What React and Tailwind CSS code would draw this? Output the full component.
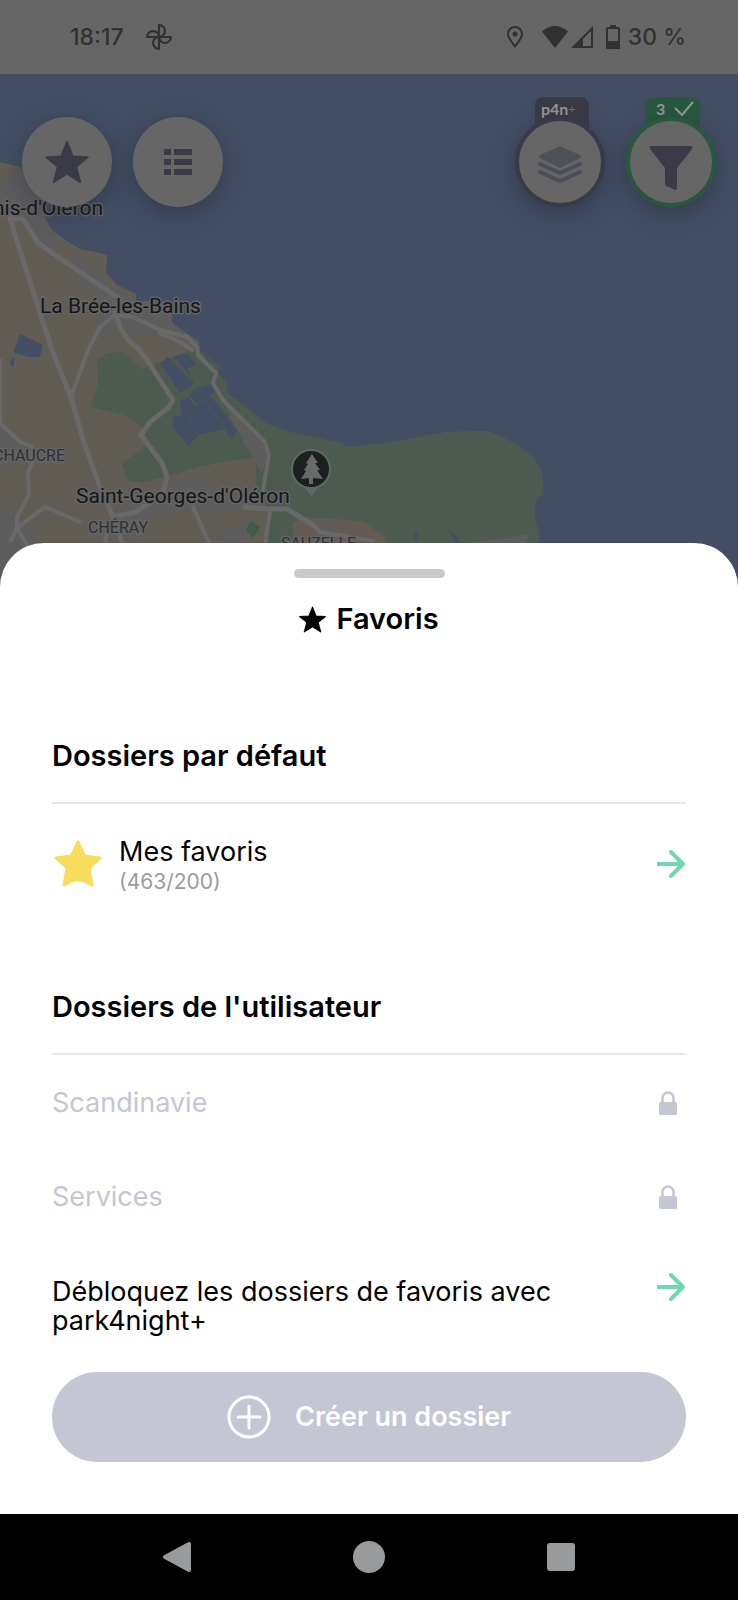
import React from 'react';
import clsx from 'clsx';

const lockedFolders = ['Scandinavie', 'Services'];

const ROUND_BUTTON =
  'relative flex h-[90px] w-[90px] items-center justify-center rounded-full bg-[#666666] shadow-[0_6px_24px_rgba(30,40,56,0.45)]';

function StarIcon({ className }) {
  return (
    <svg viewBox="0 0 24 24" className={className} fill="currentColor" stroke="currentColor" strokeWidth="1" strokeLinejoin="round" aria-hidden="true">
      <path d="M12 1 L15.1 8.900 L23.400 9.300 L17 14.600 L19.300 23 L12 18.400 L4.700 23 L7 14.600 L0.600 9.300 L8.900 8.900 Z" />
    </svg>
  );
}

function YellowStarIcon({ className }) {
  return (
    <svg viewBox="0 0 48 48" className={className} fill="#f9dc5c" stroke="#f9dc5c" strokeWidth="3" strokeLinejoin="round" aria-hidden="true">
      <path d="M24 2 L30.500 16 L46 18 L35 28 L38 45 Q30 40 24 39.500 Q18 40 10 45 L13 28 L2 18 L17.500 16 Z" />
    </svg>
  );
}

function ArrowIcon() {
  return (
    <svg viewBox="0 0 30 30" className="h-[30px] w-[30px] shrink-0" fill="none" stroke="#6fd9ab" strokeWidth="4" aria-hidden="true">
      <path d="M1 15 H27" />
      <path d="M15 3 L27 15 L15 27" strokeLinecap="round" strokeLinejoin="round" />
    </svg>
  );
}

function LockIcon() {
  return (
    <svg viewBox="0 0 18 24" className="mr-[9px] h-6 w-[18px]" aria-hidden="true">
      <path d="M3.500 13 V7 A5.500 5.500 0 0 1 14.500 7 V13" fill="none" stroke="#c4c6d3" strokeWidth="2.600" />
      <rect x="0" y="11" width="18" height="13" rx="1.500" fill="#c4c6d3" />
    </svg>
  );
}

function StatusBar() {
  return (
    <div className="flex h-[74px] items-center justify-between bg-[#666666] pr-[52px] pl-[70px] text-[23px] font-medium text-[#2f3231]">
      <div className="flex items-center gap-[22px]">
        <span>18:17</span>
        <svg viewBox="0 0 24 24" className="h-[26px] w-[26px]" fill="none" stroke="currentColor" strokeWidth="2" strokeLinejoin="round" aria-hidden="true">
          <path d="M12 12 V1 A5.500 5.500 0 0 1 12 12" />
          <path d="M12 12 H1 A5.500 5.500 0 0 1 12 12" />
          <path d="M12 12 V23 A5.500 5.500 0 0 1 12 12" />
          <path d="M12 12 H23 A5.500 5.500 0 0 1 12 12" />
        </svg>
      </div>
      <div className="flex items-center">
        <svg viewBox="0 0 16 22" className="mr-[19px] h-[22px] w-4" fill="none" stroke="currentColor" strokeWidth="2" aria-hidden="true">
          <path d="M8 20.500 C5 16.500 1 12 1 8 A7 7 0 0 1 15 8 C15 12 11 16.500 8 20.500 Z" />
          <circle cx="8" cy="8" r="2.500" fill="currentColor" stroke="none" />
        </svg>
        <svg viewBox="0 0 26 22" className="mr-[3px] h-[22px] w-[26px]" fill="currentColor" aria-hidden="true">
          <path d="M0 5.500 Q13 -5.500 26 5.500 L13 22 Z" />
        </svg>
        <svg viewBox="0 0 22 22" className="mr-[13px] h-[22px] w-[22px]" aria-hidden="true">
          <path d="M2.500 21 L21 2.500 V21 Z" fill="none" stroke="currentColor" strokeWidth="2" />
          <path d="M1 22 L12 11 V22 Z" fill="currentColor" />
        </svg>
        <svg viewBox="0 0 14 24" className="mr-2 h-6 w-[14px]" aria-hidden="true">
          <path d="M4 0 H10 V3 H4 Z M0 16 H14 V23 Q14 24 13 24 H1 Q0 24 0 23 Z" fill="currentColor" />
          <rect x="1" y="3" width="12" height="20" rx="1" fill="none" stroke="currentColor" strokeWidth="2" />
        </svg>
        <span>30 %</span>
      </div>
    </div>
  );
}

function MapBackground() {
  return (
    <svg
      viewBox="0 74 738 519"
      preserveAspectRatio="xMidYMin slice"
      className="absolute inset-0 h-full w-full"
      role="img"
      aria-label="Carte de l'île d'Oléron"
    >
      <rect x="0" y="74" width="738" height="519" fill="#434e64" />

      {/* Island */}
      <path
        d="M0 162 L20 167 L45 200 V218 L52 230 L62 238 L80 249 L95 252 L107 255 L106 273 L117 285 L136 294 V302 L160 300 L172 313 V323 L199 342 L200 353 L220 367 L217 373 L227 382 V393 L247 408 L267 424 L293 433 L342 443 L346 447 L380 444 L410 439 L447 432 L488 431 L512 442 L533 457 L542 473 L543 493 L536 500 L534 513 L539 535 L536 593 H0 Z"
        fill="#625d54"
      />

      {/* Woods */}
      <path
        d="M97 360 L107 353 L125 352 L142 369 L157 363 L197 348 L220 367 L217 373 L227 382 V393 L247 408 L267 424 L293 433 L342 443 L346 447 L380 444 L410 439 L447 432 L488 431 L512 442 L533 457 L542 473 L543 493 L536 500 L534 513 L539 535 V593 H266 L272 515 L257 490 L255 457 L197 467 L170 476 L143 482 L128 481 L122 464 L145 446 L142 427 L127 416 L91 407 L98 383 Z"
        fill="#4d5a50"
      />
      <path d="M272 513 L292 512 L299 518 L290 530 L285 545 H266 Z" fill="#4d5a50" />
      <path d="M293 523 L303 517 L363 521 L385 537 V560 H293 Z" fill="#645b52" />
      <g fill="#3c5d4c">
        <path d="M244 529 L251 521 L260 527 L253 538 Z" />
        <path d="M217 540 L222 537 L227 541 V546 H217 Z" />
      </g>

      {/* Built-up areas */}
      <g fill="#5d5d5d">
        <path d="M0 184 L20 168 L45 200 V218 L52 230 L67 242 L40 247 L24 222 L0 213 Z" />
        <path d="M75 250 L108 280 L136 302 L160 300 L172 313 V323 L199 342 L180 339 L133 333 L113 327 L94 343 L97 317 L107 307 L73 273 Z" />
        <path d="M223 400 L265 442 L268 456 L262 473 L250 453 L233 423 Z" />
        <path d="M167 487 L195 474 L217 490 L245 505 L207 515 L190 510 L147 518 L135 533 L113 540 L105 528 L110 510 L150 500 Z" />
        <path d="M0 420 L20 441 L35 447 V460 L0 470 Z" />
        <path d="M0 520 L12 507 L25 520 L40 545 L45 593 H0 Z" />
        <path d="M217 540 L240 522 L250 520 L242 545 H210 Z" />
        <path d="M303 518 L325 520 L345 535 L320 532 Z" />
        <path d="M470 543 L530 534 L525 545 H470 Z" />
      </g>

      {/* Salt ponds and basins */}
      <g fill="#434e64">
        <path d="M160 363 L168 357 L195 383 L180 393 Z" />
        <path d="M173 356 L188 354 L196 364 L187 369 L194 380 Z" />
        <path d="M195 388 L210 383 L215 392 L197 404 L189 395 Z" />
        <path d="M180 400 L188 397 L195 407 L207 398 L213 398 L237 430 L232 440 L227 433 L225 429 L198 435 L189 446 L172 427 L173 417 L182 415 Z" />
        <path d="M20 334 L43 345 L40 357 H28 L13 352 Z" />
        <path d="M9 362 L15 357 L13 368 Z" />
        <path d="M413 535 L418 530 L417 545 Z" />
        <path d="M448 529 L455 535 L462 545 H456 Z" />
      </g>
      <g fill="none" stroke="#4d5a50" strokeWidth="1">
        <path d="M170 357 L193 384" />
        <path d="M178 400 L212 382" />
        <path d="M203 399 L228 431" />
        <path d="M188 414 L198 435" />
      </g>

      {/* Roads */}
      <g fill="none" stroke="#696969" strokeLinecap="round" strokeLinejoin="round">
        <g strokeWidth="5">
          <path d="M10 217 L15 235 L52 350 L72 400 L83 440 L100 487 L113 517 L123 545" />
          <path d="M10 219 H23 L38 243 L80 272 L117 297" />
          <path d="M115 313 L120 327 L128 340 L138 348 L147 360 L173 400 L168 408 L150 422 L141 435 L162 463 L167 477 L163 493" />
          <path d="M113 517 L135 512 L155 500" />
          <path d="M245 507 L267 509 H287 L313 525" />
        </g>
        <g strokeWidth="4">
          <path d="M115 315 L100 327 L88 350 L70 400" />
          <path d="M117 315 L133 317 L160 330 L187 337 L197 347 L198 355 L216 373 L213 383 L223 400 L265 442 L269 455 L263 490" />
          <path d="M160 333 L180 342 L192 350" />
          <path d="M0 360 V423 L20 442 L33 447 L32 463 L28 473 L29 495 L17 517 V528 L11 540" />
          <path d="M17 528 L45 507 L80 522" />
          <path d="M17 528 L30 550" />
          <path d="M193 507 L210 545" />
          <path d="M270 512 L265 545" />
          <path d="M313 525 L320 532 L373 541" />
          <path d="M107 530 L105 545" />
        </g>
      </g>

      {/* Forest pin */}
      <path d="M302 484 H321 L311 497 Z" fill="#626766" />
      <circle cx="311" cy="469" r="20" fill="#626766" />
      <circle cx="311" cy="469" r="18" fill="#1b211e" />
      <path
        d="M312 454 L318 463 L315 463 L320 470 L317 470 L323 479 L313 478 V484 H309 V478 L301 479 L306 471 L304 470 L308 464 L306 463 Z"
        fill="#696b6a"
      />

      {/* Place names */}
      <g fontFamily="Roboto, sans-serif" paintOrder="stroke" stroke="#646464" strokeWidth="3" strokeLinejoin="round">
        <g fontSize="21" fill="#151719">
          <text x="103" y="215" textAnchor="end">nis-d'Oléron</text>
          <text x="40" y="313">La Brée-les-Bains</text>
          <text x="76" y="503">Saint-Georges-d'Oléron</text>
        </g>
        <g fontSize="16" fill="#2e3035">
          <text x="65" y="461" textAnchor="end">CHAUCRE</text>
          <text x="88" y="533">CHÉRAY</text>
          <text x="281" y="549">SAUZELLE</text>
        </g>
      </g>
    </svg>
  );
}

function MapTab({ children, className }) {
  return (
    <span
      className={clsx(
        'absolute -top-5 left-5 flex h-8 w-[54px] items-start rounded-t-lg px-[6px] pt-[2px] text-base leading-5 text-[#979797]',
        className
      )}
    >
      {children}
    </span>
  );
}

function MapToolbar() {
  return (
    <div className="relative flex justify-between px-[22px] pt-[43px] font-['Lato',sans-serif]">
      <div className="flex gap-[21px]">
        <button type="button" aria-label="Favoris" className={ROUND_BUTTON}>
          <StarIcon className="h-11 w-11 text-[#3b3b47]" />
        </button>
        <button type="button" aria-label="Liste" className={ROUND_BUTTON}>
          <svg viewBox="0 0 28 28" className="h-7 w-7" fill="#3b3b47" aria-hidden="true">
            <path d="M0 1 H7 V7 H0 Z M10 1 H28 V7 H10 Z" />
            <path d="M0 11 H7 V17 H0 Z M10 11 H28 V17 H10 Z" />
            <path d="M0 21 H7 V27 H0 Z M10 21 H28 V27 H10 Z" />
          </svg>
        </button>
      </div>

      <div className="flex gap-[21px]">
        <div className="relative">
          <MapTab className="bg-[#3b3b47]">
            <span className="font-bold">p4n</span>
            <span className="text-xs leading-5 text-[#77735c]">+</span>
          </MapTab>
          <button type="button" aria-label="Couches" className={clsx(ROUND_BUTTON, 'border-4 border-[#3b3b47]')}>
            <svg viewBox="0 0 44 38" className="mt-1 h-[38px] w-11" aria-hidden="true">
              <path d="M22 1 L42 10 Q44 11 42 13 L22 23 L2 13 Q0 11 2 10 Z" fill="#4c5158" />
              <path d="M2 19 L22 28 L42 19 M2 27 L22 36 L42 27" fill="none" stroke="#4c5158" strokeWidth="4" strokeLinecap="round" strokeLinejoin="round" />
            </svg>
          </button>
        </div>
        <div className="relative">
          <MapTab className="justify-between bg-[#28593f]">
            <span className="pl-1 font-bold">3</span>
            <svg viewBox="0 0 20 16" className="mt-[2px] h-4 w-5" fill="none" stroke="currentColor" strokeWidth="2" aria-hidden="true">
              <path d="M1 7 L8 14 L19 1" />
            </svg>
          </MapTab>
          <button type="button" aria-label="Filtres" className={clsx(ROUND_BUTTON, 'border-4 border-[#28593f]')}>
            <svg viewBox="0 0 44 44" className="mt-3 h-11 w-11" fill="#3b3b47" aria-hidden="true">
              <path d="M2 0 H42 Q44 1 43 3 L28 22 V43 Q27 45 24 43 L17 40 Q16 39 16 37 V22 L1 3 Q0 1 2 0 Z" />
            </svg>
          </button>
        </div>
      </div>
    </div>
  );
}

function SectionTitle({ children }) {
  return (
    <h2 className="border-b-2 border-[#e4e4eb] pt-[2px] pb-[26px] text-[29px] leading-10 font-semibold">{children}</h2>
  );
}

function FavoritesSheet() {
  return (
    <main className="relative -mt-[50px] rounded-t-[44px] bg-white px-[52px] pt-[26px] pb-[52px] text-[27px] text-black">
      <div className="mx-auto h-[9px] w-[151px] rounded-full bg-[#c9c9c9]" />
      <h1 className="mt-[21px] flex items-center justify-center gap-[10px] text-[29px] leading-10 font-semibold">
        <StarIcon className="h-[27px] w-[27px]" />
        Favoris
      </h1>

      <section className="mt-[95px]">
        <SectionTitle>Dossiers par défaut</SectionTitle>
        <a href="#favoris" className="flex h-[120px] items-center">
          <YellowStarIcon className="ml-[2px] h-12 w-12" />
          <span className="ml-[17px] flex flex-1 flex-col pt-[3px]">
            <span className="leading-8">Mes favoris</span>
            <span className="text-[21px] leading-7 text-[#9b9ba2]">(463/200)</span>
          </span>
          <ArrowIcon />
        </a>
      </section>

      <section className="mt-[61px]">
        <SectionTitle>Dossiers de l'utilisateur</SectionTitle>
        <ul>
          {lockedFolders.map((name) => (
            <li key={name} className="flex h-[94px] items-center justify-between pt-[2px] text-[#c4c6d3]">
              {name}
              <LockIcon />
            </li>
          ))}
        </ul>
        <a href="#premium" className="flex items-start justify-between pt-[29px] leading-[29px]">
          <span className="max-w-[540px] pt-[5px]">Débloquez les dossiers de favoris avec park4night+</span>
          <ArrowIcon />
        </a>
      </section>

      <button
        type="button"
        className="mt-[37px] flex h-[90px] w-full items-center justify-center gap-6 rounded-full bg-[#c4c6d3] font-semibold text-white"
      >
        <svg viewBox="0 0 44 44" className="h-11 w-11" fill="none" stroke="currentColor" strokeWidth="3" strokeLinecap="round" aria-hidden="true">
          <circle cx="22" cy="22" r="20" />
          <path d="M22 11 V33 M11 22 H33" />
        </svg>
        Créer un dossier
      </button>
    </main>
  );
}

function NavigationBar() {
  return (
    <nav className="flex h-[86px] items-center justify-center gap-24 bg-black text-[#999a9b]">
      <button type="button" aria-label="Retour" className="flex w-24 justify-center">
        <svg viewBox="0 0 28 32" className="h-8 w-7" fill="currentColor" stroke="currentColor" strokeWidth="4" strokeLinejoin="round" aria-hidden="true">
          <path d="M2 16 L26 3 V29 Z" />
        </svg>
      </button>
      <button type="button" aria-label="Accueil" className="flex w-24 justify-center">
        <span className="h-8 w-8 rounded-full bg-current" />
      </button>
      <button type="button" aria-label="Applications récentes" className="flex w-24 justify-center">
        <span className="h-7 w-7 rounded-[3px] bg-current" />
      </button>
    </nav>
  );
}

export default function App() {
  return (
    <div className="flex min-h-screen flex-col bg-black font-['Inter',sans-serif]">
      <StatusBar />
      <header className="relative h-[519px] overflow-hidden">
        <MapBackground />
        <MapToolbar />
      </header>
      <FavoritesSheet />
      <NavigationBar />
    </div>
  );
}
